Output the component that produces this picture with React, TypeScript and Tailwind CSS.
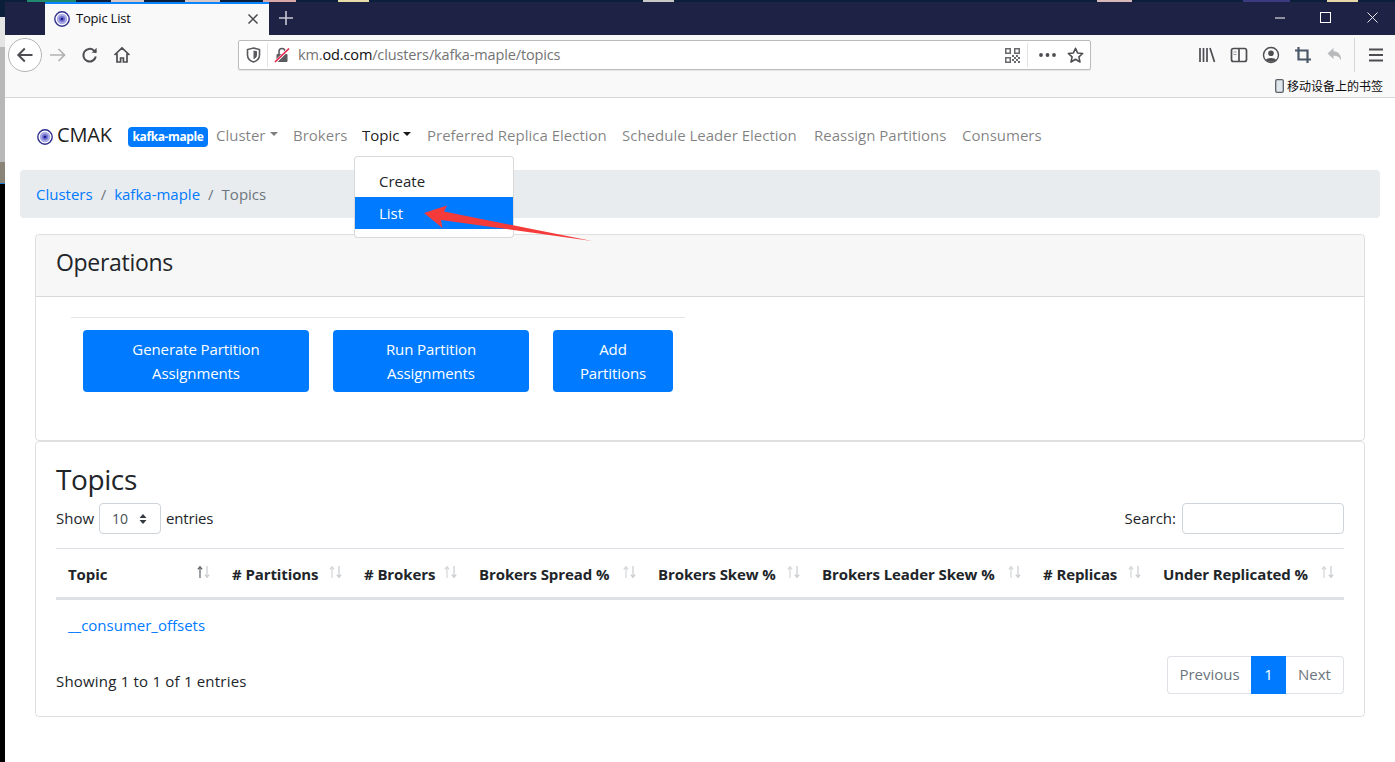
import React from 'react';

const BLUE = 'bg-[#007bff]';

function Favicon({ size = 16, className = '' }: { size?: number; className?: string }) {
  return (
    <svg width={size} height={size} viewBox="0 0 16 16" className={`shrink-0 ${className}`}>
      <circle cx="8" cy="8" r="7.2" fill="#fff" stroke="#2f2f8f" strokeWidth="1.4" />
      <circle cx="8" cy="8" r="5.2" fill="#a9a9e4" />
      <circle cx="8" cy="8" r="3" fill="#6f6fd0" />
      <circle cx="8" cy="8" r="1.3" fill="#1c1c8a" />
    </svg>
  );
}

function SortArrows({ active = false }: { active?: boolean }) {
  return (
    <svg width="16" height="14" viewBox="0 0 16 14" className="shrink-0">
      <path d="M4 13V2M1.8 4.4 4 1.6l2.2 2.8" fill="none" stroke={active ? '#5f6468' : '#d4d6d8'} strokeWidth="1.2" />
      <path d="M11 1v11M8.8 9.6 11 12.4l2.2-2.8" fill="none" stroke="#c9cccf" strokeWidth="1.2" />
    </svg>
  );
}

function TopStrip() {
  return (
    <div className="flex h-[2px] bg-[#0b1f3a]">
      <span className="ml-[27px] w-[49px] bg-[#1f8a70]" />
      <span className="ml-[35px] w-[33px] bg-[#d8c8c8]" />
      <span className="ml-[41px] w-[35px] bg-[#d8c8c8]" />
      <span className="ml-[43px] w-[33px] bg-[#d8a8a8]" />
      <span className="ml-[42px] w-[31px] bg-[#e8dca8]" />
      <span className="ml-[274px] w-[31px] bg-[#c8c8c8]" />
      <span className="ml-[423px] w-[35px] bg-[#d8b8b8]" />
      <span className="ml-[111px] w-[47px] bg-[#3a3a80]" />
      <span className="ml-[37px] w-[31px] bg-[#e8d8a8]" />
    </div>
  );
}

function LeftStrip() {
  return (
    <div className="flex w-[5px] shrink-0 flex-col">
      <div className="h-[15px] bg-[#0b1f3a]" />
      <div className="h-[30px] bg-[#e4e4e4]" />
      <div className="h-[115px] bg-[#b8b8b8]" />
      <div className="h-[21px] bg-[#8a8478]" />
      <div className="h-[1px] bg-[#1f7fd0]" />
      <div className="flex-1 bg-black" />
    </div>
  );
}

function TitleBar() {
  return (
    <div className="flex h-[33px] bg-[#1e2244]">
      <div className="ml-[40px] flex h-[33px] w-[224px] items-center border-t-2 border-[#0a84ff] bg-[#f9f9fa] pb-[1px] pl-[9px] pr-[10px] text-[13px] text-[#0c0c0d]">
        <Favicon />
        <span className="ml-[6px] flex-1 tracking-[-0.2px]">Topic List</span>
        <svg width="12" height="12" viewBox="0 0 12 12">
          <path d="M1.5 1.5l9 9M10.5 1.5l-9 9" stroke="#4a4a4f" strokeWidth="1.5" />
        </svg>
      </div>
      <div className="ml-[10px] flex items-center pb-[2px]">
        <svg width="14" height="14" viewBox="0 0 14 14">
          <path d="M7 0v14M0 7h14" stroke="#c9cad3" strokeWidth="1.6" />
        </svg>
      </div>
      <div className="ml-auto flex items-center pb-[2px] pr-[17px]">
        <svg width="12" height="12" viewBox="0 0 12 12" className="mr-[34px]">
          <path d="M1 6h10" stroke="#fff" strokeWidth="1" />
        </svg>
        <svg width="11" height="11" viewBox="0 0 11 11" className="mr-[36px]">
          <rect x="0.5" y="0.5" width="10" height="10" fill="none" stroke="#fff" />
        </svg>
        <svg width="11" height="11" viewBox="0 0 11 11">
          <path d="M0.5 0.5l10 10M10.5 0.5l-10 10" stroke="#fff" strokeWidth="0.9" />
        </svg>
      </div>
    </div>
  );
}

function ToolIcon({ children, className = '' }: { children: React.ReactNode; className?: string }) {
  return (
    <svg width="18" height="18" viewBox="0 0 18 18" className={`shrink-0 ${className}`} fill="none" stroke="#4e4e52" strokeWidth="1.7">
      {children}
    </svg>
  );
}

function Toolbar() {
  return (
    <div className="h-[63px] border-b border-[#d7d7db] bg-[#f9f9fa]">
      <div className="flex h-[40px] items-center">
        <div className="ml-[3px] flex h-[34px] w-[34px] items-center justify-center rounded-full border border-[#b4b4b6] bg-white">
          <ToolIcon>
            <path d="M16.5 9H2M8.8 2.500 2.300 9l6.500 6.500" strokeWidth="2" />
          </ToolIcon>
        </div>
        <ToolIcon className="ml-[7px]">
          <path d="M1 9h14.5M9.5 3l6 6-6 6" stroke="#b1b1b3" />
        </ToolIcon>
        <ToolIcon className="ml-[14px]">
          <path d="M14.8 10.5A6.3 6.3 0 1 1 13 4.6l2 1.9" strokeWidth="2" />
          <path d="M15.6 1.8v5h-5" fill="#4e4e52" stroke="none" />
        </ToolIcon>
        <ToolIcon className="ml-[14px]">
          <path d="M1.5 9 9 2l7.5 7M4 7.5V16h3.6v-4h2.800v4H14V7.5" />
        </ToolIcon>

        <div className="ml-[107px] flex h-[30px] w-[853px] items-center rounded-[2px] border border-[#bcbcbe] bg-white pl-[7px] pr-[6px] shadow-[0_1px_1px_rgba(0,0,0,0.08)]">
          <svg width="15" height="16" viewBox="0 0 15 16" className="shrink-0">
            <path d="M7.5 1 13.5 2.6V8c0 3.5-3 6-6 7-3-1-6-3.5-6-7V2.6Z" fill="none" stroke="#5b5b5f" strokeWidth="1.6" />
            <path d="M7.5 3.5 11 4.300V8c0 2-1.800 3.500-3.500 4.300Z" fill="#5b5b5f" />
          </svg>
          <div className="ml-[6px] h-[24px] w-px bg-[#e2e2e4]" />
          <svg width="16" height="16" viewBox="0 0 16 16" className="ml-[6px] shrink-0">
            <rect x="2.500" y="7" width="11" height="8" rx="1" fill="#5b5b5f" />
            <path d="M5 7V4.500a3 3 0 0 1 6 0V7" fill="none" stroke="#5b5b5f" strokeWidth="1.6" />
            <path d="M1 15.500 15 1.500" stroke="#fff" strokeWidth="3" />
            <path d="M1 15 15 1.500" stroke="#e8244c" strokeWidth="1.700" />
          </svg>
          <div className="ml-[8px] flex-1 text-[14.5px] tracking-[-0.13px] text-[#737373]">
            km.<span className="text-[#0c0c0d]">od.com</span>/clusters/kafka-maple/topics
          </div>
          <svg width="15" height="15" viewBox="0 0 15 15" className="shrink-0" fill="#6a6a6e">
            <path d="M0 0h6v6H0ZM1.500 1.500v3h3v-3ZM9 0h6v6H9ZM10.500 1.500v3h3v-3ZM0 9h6v6H0ZM1.500 10.500v3h3v-3Z" fillRule="evenodd" />
            <path d="M7 7h2v2H7ZM11 7h2v2h-2ZM9 9h2v2H9ZM13 9h2v2h-2ZM7 11h2v2H7ZM11 11h2v2h-2ZM9 13h2v2H9ZM13 13h2v2h-2Z" />
          </svg>
          <div className="ml-[7px] h-[24px] w-px bg-[#e2e2e4]" />
          <svg width="17" height="4" viewBox="0 0 17 4" className="ml-[11px] shrink-0" fill="#4e4e52">
            <circle cx="2" cy="2" r="1.900" />
            <circle cx="8.500" cy="2" r="1.900" />
            <circle cx="15" cy="2" r="1.900" />
          </svg>
          <svg width="17" height="17" viewBox="0 0 17 17" className="ml-[11px] shrink-0">
            <path d="M8.500 1.300 10.600 6l5.100.5-3.800 3.400 1.100 5.100-4.500-2.700L4 15l1.100-5.100L1.300 6.500 6.400 6Z" fill="none" stroke="#4e4e52" strokeWidth="1.600" strokeLinejoin="round" />
          </svg>
        </div>

        <ToolIcon className="ml-[107px]">
          <path d="M2 2v14M5.500 2v14M9 2v14M12 2l4.500 14" />
        </ToolIcon>
        <ToolIcon className="ml-[14px]">
          <rect x="1.500" y="2.500" width="15" height="13" rx="2" />
          <path d="M9 3v12" />
          <path d="M3.500 6h3M3.500 8.500h3" stroke="#9a9a9e" strokeWidth="1" />
        </ToolIcon>
        <ToolIcon className="ml-[14px]">
          <circle cx="9" cy="9" r="7.500" strokeWidth="1.400" />
          <circle cx="9" cy="7.200" r="2.800" fill="#4e4e52" stroke="none" />
          <path d="M3.800 14c1-2.800 9.400-2.800 10.400 0-2.500 2.400-7.900 2.400-10.400 0Z" fill="#4e4e52" stroke="none" />
        </ToolIcon>
        <ToolIcon className="ml-[14px]">
          <path d="M4.500 1v12.500H17M1 4.500h12.500V17" stroke="#4a5868" strokeWidth="2.200" />
        </ToolIcon>
        <ToolIcon className="ml-[14px]">
          <path d="M7.5 2 1.500 7.500l6 5.500V9.800c3.500 0 6 1 7.500 4.700.5-5.500-2.500-9-7.500-9.300Z" fill="#b9babc" stroke="none" />
        </ToolIcon>
        <div className="ml-[10px] h-[34px] w-px bg-[#d7d7db]" />
        <ToolIcon className="ml-[12px]">
          <path d="M2 3.500h14M2 9h14M2 14.500h14" strokeWidth="2" />
        </ToolIcon>
      </div>
      <div className="flex h-[22px] items-center justify-end pr-[12px] text-[12px] text-[#0c0c0d]">
        <svg width="9" height="14" viewBox="0 0 9 14" className="mr-[3px]">
          <rect x="0.700" y="0.700" width="7.600" height="12.600" rx="1.400" fill="#dfe6ec" stroke="#5b6168" strokeWidth="1.300" />
        </svg>
        <span className="font-['Noto_Sans_CJK_SC',sans-serif]">移动设备上的书签</span>
      </div>
    </div>
  );
}

function Nav() {
  return (
    <div className="flex h-[72px] items-center pt-[2px] pl-[32px] text-[15px] text-[#00000080]">
      <Favicon className="mt-[4px]" />
      <span className="ml-[4px] w-[71px] text-[20px] tracking-[-0.2px] text-[#000000e6]">CMAK</span>
      <span className={`mt-[4px] w-[80px] rounded-[4px] ${BLUE} py-[1px] text-center text-[12px] font-bold tracking-[-0.4px] text-white`}>kafka-maple</span>
      <div className="ml-[8px] flex w-[77px] items-center">
        Cluster
        <span className="ml-[5px] mt-[-2px] border-x-[4.800px] border-t-[4.800px] border-x-transparent border-t-[#00000080]" />
      </div>
      <span className="w-[69px]">Brokers</span>
      <div className="flex w-[65px] items-center text-[#000000e6]">
        Topic
        <span className="ml-[4px] mt-[-2px] border-x-[4.800px] border-t-[4.800px] border-x-transparent border-t-[#000000e6]" />
      </div>
      <span className="w-[195px]">Preferred Replica Election</span>
      <span className="w-[192px]">Schedule Leader Election</span>
      <span className="w-[148px]">Reassign Partitions</span>
      <span>Consumers</span>
    </div>
  );
}

function Dropdown() {
  return (
    <div className="absolute left-[349px] top-[58px] z-10 h-[82px] w-[160px] rounded-[4px] border border-[#00000026] bg-white py-[8px] text-[15px] text-[#212529]">
      <div className="flex h-[32px] items-center pl-[24px] pt-[1px]">Create</div>
      <div className={`flex h-[32px] items-center pl-[24px] pt-[1px] text-white ${BLUE}`}>List</div>
    </div>
  );
}

function Arrow() {
  return (
    <svg width="180" height="50" viewBox="0 0 180 50" className="absolute left-[415px] top-[103px] z-20">
      <path d="M4 12 27 4.500 24 10.500 172 40 21 19 22.500 27Z" fill="#f53a3a" />
    </svg>
  );
}

function Breadcrumb() {
  return (
    <div className="mx-[15px] flex h-[48px] items-center gap-[8px] rounded-[4px] bg-[#e9ecef] px-[16px] pt-[1px] text-[15px] text-[#6c757d]">
      <span className="text-[#007bff]">Clusters</span>
      <span>/</span>
      <span className="text-[#007bff]">kafka-maple</span>
      <span>/</span>
      <span>Topics</span>
    </div>
  );
}

function OpButton({ width, top, bottom }: { width: string; top: string; bottom: string }) {
  return (
    <div className={`flex h-[62px] flex-col items-center justify-center rounded-[4px] ${BLUE} ${width} text-[15px] leading-[24px] tracking-[-0.1px] text-white`}>
      <span>{top}</span>
      <span>{bottom}</span>
    </div>
  );
}

function Operations() {
  return (
    <div className="mx-[30px] mt-[16px] h-[207px] rounded-[4px] border border-[#00000020]">
      <div className="flex h-[62px] items-center rounded-t-[4px] border-b border-[#00000020] bg-[#00000008] pb-[6px] pl-[20px] text-[23px] tracking-[-0.3px] text-[#212529]">
        Operations
      </div>
      <div className="pl-[35px] pt-[20px]">
        <div className="w-[614px] border-t border-[#0000001a] pl-[12px] pt-[12px]">
          <div className="flex gap-[24px]">
            <OpButton width="w-[226px]" top="Generate Partition" bottom="Assignments" />
            <OpButton width="w-[196px]" top="Run Partition" bottom="Assignments" />
            <OpButton width="w-[120px]" top="Add" bottom="Partitions" />
          </div>
        </div>
      </div>
    </div>
  );
}

const columns = [
  { label: 'Topic', width: 'w-[164px]', active: true },
  { label: '# Partitions', width: 'w-[132px]' },
  { label: '# Brokers', width: 'w-[115px]' },
  { label: 'Brokers Spread %', width: 'w-[179px]' },
  { label: 'Brokers Skew %', width: 'w-[164px]' },
  { label: 'Brokers Leader Skew %', width: 'w-[221px]' },
  { label: '# Replicas', width: 'w-[120px]' },
  { label: 'Under Replicated %', width: 'w-[193px]' },
];

function Topics() {
  return (
    <div className="mx-[30px] h-[276px] rounded-[4px] border border-[#00000020] px-[20px] text-[15px] text-[#212529]">
      <div className="pt-[18px] text-[28px] leading-[38px] tracking-[-0.4px]">Topics</div>
      <div className="mt-[5px] flex h-[31px] items-center justify-between">
        <div className="flex items-center">
          Show
          <div className="ml-[5px] flex h-[31px] w-[62px] items-center rounded-[4px] border border-[#ced4da] pl-[12px] text-[14px] text-[#495057]">
            10
            <svg width="8" height="12" viewBox="0 0 8 12" className="ml-[11px]" fill="#343a40">
              <path d="M4 1 7.500 5H.5ZM4 11 .5 7h7Z" />
            </svg>
          </div>
          <span className="ml-[5px] tracking-[-0.2px]">entries</span>
        </div>
        <div className="flex items-center">
          Search:
          <div className="ml-[6px] h-[31px] w-[162px] rounded-[4px] border border-[#ced4da]" />
        </div>
      </div>
      <table className="mt-[14px] w-full table-fixed border-collapse">
        <thead>
          <tr className="h-[50px] border-y border-b-[3px] border-[#dee2e6] border-t-[#dee2e6]">
            {columns.map((col) => (
              <th key={col.label} className={`${col.width} pl-[12px] pr-[8px] pt-[2px] text-left text-[15px] font-bold tracking-[-0.1px]`}>
                <div className="flex items-center justify-between">
                  <span className="whitespace-nowrap">{col.label}</span>
                  <span className="mt-[-4px]">
                    <SortArrows active={col.active} />
                  </span>
                </div>
              </th>
            ))}
          </tr>
        </thead>
        <tbody>
          <tr>
            <td colSpan={8} className="h-[52px] pl-[12px] text-[#007bff]">__consumer_offsets</td>
          </tr>
        </tbody>
      </table>
      <div className="mt-[5px] flex items-start justify-between">
        <span className="pt-[14px] tracking-[0.2px]">Showing 1 to 1 of 1 entries</span>
        <div className="flex h-[38px] items-stretch text-[#6c757d]">
          <span className="flex w-[84px] items-center justify-center rounded-l-[4px] border border-r-0 border-[#dee2e6]">Previous</span>
          <span className={`flex w-[35px] items-center justify-center text-white ${BLUE}`}>1</span>
          <span className="flex w-[58px] items-center justify-center rounded-r-[4px] border border-l-0 border-[#dee2e6]">Next</span>
        </div>
      </div>
    </div>
  );
}

export default function App() {
  return (
    <div className="h-[762px] w-[1395px] overflow-hidden bg-white font-['Open_Sans','Noto_Sans_CJK_SC',sans-serif]">
      <TopStrip />
      <div className="flex h-[760px]">
        <LeftStrip />
        <div className="flex-1">
          <TitleBar />
          <Toolbar />
          <div className="relative">
            <Nav />
            <Dropdown />
            <Arrow />
            <Breadcrumb />
            <Operations />
            <Topics />
          </div>
        </div>
      </div>
    </div>
  );
}
